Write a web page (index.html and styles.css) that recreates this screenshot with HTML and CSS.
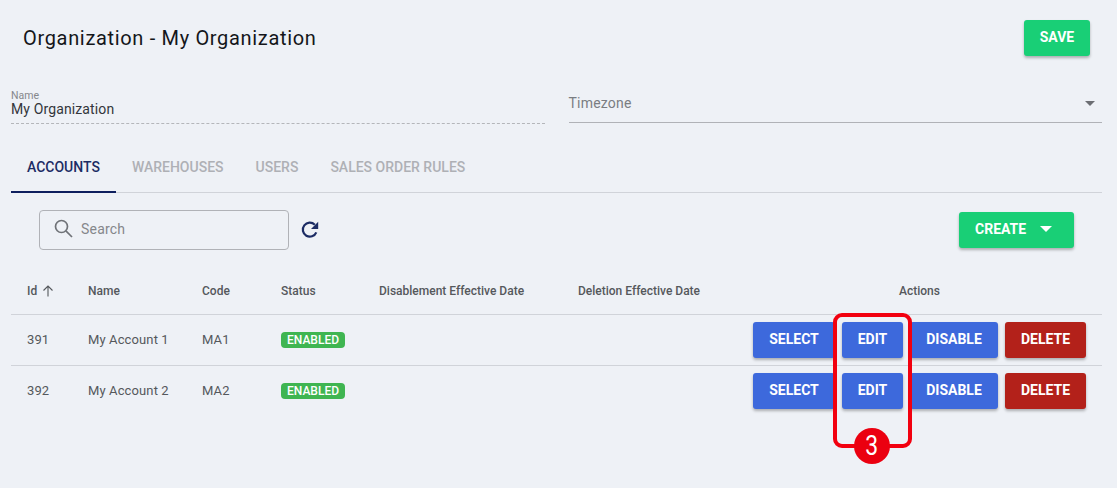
FILE: index.html
```html
<!DOCTYPE html>
<html lang="en">
<head>
    <meta charset="UTF-8">
    <title>Organization - My Organization</title>
    <link rel="stylesheet" href="styles.css">
</head>
<body>
    <div class="page">
        <header class="page-header">
            <h1>Organization - My Organization</h1>
            <button type="button" class="btn btn-green btn-save"><span class="btn-text">SAVE</span></button>
        </header>

        <div class="fields">
            <div class="field field-name">
                <span class="field-label">Name</span>
                <span class="field-value">My Organization</span>
            </div>
            <div class="field field-timezone">
                <span class="field-placeholder">Timezone</span>
                <svg class="caret" width="10" height="5" viewBox="0 0 10 5"><path d="M0 0h10L5 5z"/></svg>
            </div>
        </div>

        <nav class="tabs">
            <a class="tab tab-active">ACCOUNTS</a>
            <a class="tab">WAREHOUSES</a>
            <a class="tab">USERS</a>
            <a class="tab">SALES ORDER RULES</a>
        </nav>

        <div class="toolbar">
            <div class="search">
                <svg width="20" height="20" viewBox="0 0 20 20" fill="none" stroke="#6f7277" stroke-width="1.7"><circle cx="7.500" cy="7.500" r="6"/><path d="M11.900 11.900L18 18"/></svg>
                <span>Search</span>
            </div>
            <svg class="refresh" width="20" height="20" viewBox="0 0 20 20" fill="none"><path d="M16.300 12.300A7 7 0 1 1 14.800 4.700" stroke="#1c2c64" stroke-width="2.200"/><path d="M18.200 1.800V9H11z" fill="#1c2c64"/></svg>
            <button type="button" class="btn btn-green btn-create"><span class="btn-text">CREATE</span>
                <svg width="12" height="6" viewBox="0 0 12 6"><path d="M0 0h12L6 6z" fill="#fff"/></svg>
            </button>
        </div>

        <table class="accounts">
            <colgroup>
                <col class="col-id"><col class="col-name"><col class="col-code"><col class="col-status"><col class="col-disable"><col class="col-delete"><col class="col-actions">
            </colgroup>
            <thead>
                <tr>
                    <th>Id <svg class="sort" width="12" height="12" viewBox="0 0 12 12" fill="none" stroke="#55585c" stroke-width="1.1"><path d="M6 11.500V1M1.500 5.500L6 1l4.500 4.500"/></svg></th>
                    <th>Name</th>
                    <th>Code</th>
                    <th>Status</th>
                    <th>Disablement Effective Date</th>
                    <th>Deletion Effective Date</th>
                    <th class="center">Actions</th>
                </tr>
            </thead>
            <tbody>
                <tr>
                    <td>391</td>
                    <td>My Account 1</td>
                    <td>MA1</td>
                    <td><span class="badge">ENABLED</span></td>
                    <td></td>
                    <td></td>
                    <td>
                        <div class="actions">
                            <button type="button" class="btn btn-blue btn-select"><span class="btn-text">SELECT</span></button>
                            <button type="button" class="btn btn-blue btn-edit"><span class="btn-text">EDIT</span></button>
                            <button type="button" class="btn btn-blue btn-disable"><span class="btn-text">DISABLE</span></button>
                            <button type="button" class="btn btn-red btn-delete"><span class="btn-text">DELETE</span></button>
                        </div>
                    </td>
                </tr>
                <tr>
                    <td>392</td>
                    <td>My Account 2</td>
                    <td>MA2</td>
                    <td><span class="badge">ENABLED</span></td>
                    <td></td>
                    <td></td>
                    <td>
                        <div class="actions">
                            <button type="button" class="btn btn-blue btn-select"><span class="btn-text">SELECT</span></button>
                            <button type="button" class="btn btn-blue btn-edit"><span class="btn-text">EDIT</span></button>
                            <button type="button" class="btn btn-blue btn-disable"><span class="btn-text">DISABLE</span></button>
                            <button type="button" class="btn btn-red btn-delete"><span class="btn-text">DELETE</span></button>
                        </div>
                    </td>
                </tr>
            </tbody>
        </table>
    </div>

    <div class="callout"></div>
    <div class="callout-num"><span>3</span></div>
</body>
</html>
```

FILE: styles.css
```css
* {
    box-sizing: border-box;
}
html, body {
    margin: 0;
    height: 100%;
    overflow: hidden;
}
body {
    font-family: Roboto, "Liberation Sans", sans-serif;
    background-color: #eef1f6;
    color: #55585c;
    position: relative;
}
.page {
    padding: 20px 15px 0 11px;
}
.page-header {
    display: flex;
    justify-content: space-between;
    align-items: center;
    padding: 0 12px 0 12px;
    height: 36px;
}
h1 {
    margin: 0;
    font-size: 20px;
    font-weight: 400;
    letter-spacing: 0.67px;
    color: #14161a;
}
.btn {
    border: none;
    border-radius: 3px;
    height: 36px;
    padding: 0 0 2px;
    font-family: inherit;
    font-size: 14px;
    font-weight: 700;
    color: #fff;
    box-shadow: 0 2px 3px rgba(0, 0, 0, 0.28);
    cursor: pointer;
}
.btn-green {
    background-color: #19cf76;
}
.btn-blue {
    background-color: #3d69dc;
}
.btn-red {
    background-color: #b3211a;
}
.btn-save {
    width: 66px;
}
.fields {
    display: grid;
    grid-template-columns: 1fr 1fr;
    gap: 24px;
    margin-top: 31px;
}
.field {
    height: 37px;
}
.field-name {
    border-bottom: 1px dashed #b4b6ba;
    display: flex;
    flex-direction: column;
    padding-top: 3px;
}
.field-label {
    font-size: 10.500px;
    line-height: 11px;
    color: #85878b;
}
.field-value {
    font-size: 14px;
    line-height: 17px;
    letter-spacing: 0.12px;
    color: #33363b;
}
.field-timezone {
    border-bottom: 1px solid #b0b2b7;
    display: flex;
    justify-content: space-between;
    align-items: center;
    padding: 0 7px 4px 0;
    height: 36px;
}
.field-placeholder {
    font-size: 14px;
    letter-spacing: 0.2px;
    color: #7a7d82;
}
.caret {
    fill: #6c6e73;
    margin-top: 2px;
}
.tabs {
    display: flex;
    margin-top: 20px;
    height: 49px;
    border-bottom: 1px solid #d0d3d9;
}
.tab {
    padding: 0 16px;
    height: 49px;
    line-height: 47px;
    font-size: 14px;
    font-weight: 500;
    color: #aeb0b5;
}
.tab-active {
    color: #1c2c64;
    border-bottom: 2px solid #0e1f5e;
}
.toolbar {
    display: flex;
    align-items: center;
    padding: 0 28px;
    margin-top: 17px;
    height: 40px;
}
.search {
    width: 250px;
    height: 40px;
    border: 1px solid #b0b2b7;
    border-radius: 4px;
    display: flex;
    align-items: center;
    gap: 7px;
    padding: 0 0 2px 14px;
    font-size: 14px;
    letter-spacing: 0.2px;
    color: #85878b;
}
.refresh {
    margin-left: 11px;
}
.btn-create {
    margin-left: auto;
    width: 115px;
    display: flex;
    align-items: center;
    justify-content: flex-start;
    gap: 14px;
    padding-left: 16px;
}
.accounts {
    width: 100%;
    margin-top: 18px;
    border-collapse: collapse;
    table-layout: fixed;
    font-size: 13px;
}
.col-id { width: 61px; }
.col-name { width: 114px; }
.col-code { width: 79px; }
.col-status { width: 98px; }
.col-disable { width: 199px; }
.col-delete { width: 175px; }
th {
    height: 46px;
    padding: 1px 0 0 16px;
    text-align: left;
    font-weight: 500;
    font-size: 12px;
    color: #55585c;
    border-bottom: 1px solid #d0d3d9;
}
th.center {
    text-align: center;
    padding: 1px 0 0;
}
.sort {
    vertical-align: -2px;
    margin-left: 2px;
}
td {
    height: 51px;
    padding: 0 0 0 16px;
    letter-spacing: 0.12px;
}
tbody tr:first-child td {
    border-bottom: 1px solid #d0d3d9;
}
.badge {
    display: inline-block;
    background-color: #3fb551;
    color: #fff;
    font-size: 12px;
    font-weight: 500;
    line-height: 16px;
    height: 16px;
    padding: 0 6px;
    border-radius: 4px;
    letter-spacing: 0;
    vertical-align: middle;
}
.actions {
    display: flex;
    gap: 7px;
    padding-top: 1px;
}
.btn-select { width: 82px; }
.btn-edit { width: 61px; }
.btn-disable { width: 88px; }
.btn-delete { width: 81px; }
.callout {
    position: absolute;
    left: 833px;
    top: 313px;
    width: 79px;
    height: 135px;
    border: 4px solid #f2000f;
    border-radius: 9px;
}
.callout-num {
    position: absolute;
    left: 854px;
    top: 428px;
    width: 36px;
    height: 36px;
    border-radius: 50%;
    background-color: #eb0010;
    color: #fff;
    font-size: 27px;
    line-height: 37px;
    text-align: center;
}
.callout-num span {
    display: inline-block;
    transform: scaleX(0.85);
}
```
